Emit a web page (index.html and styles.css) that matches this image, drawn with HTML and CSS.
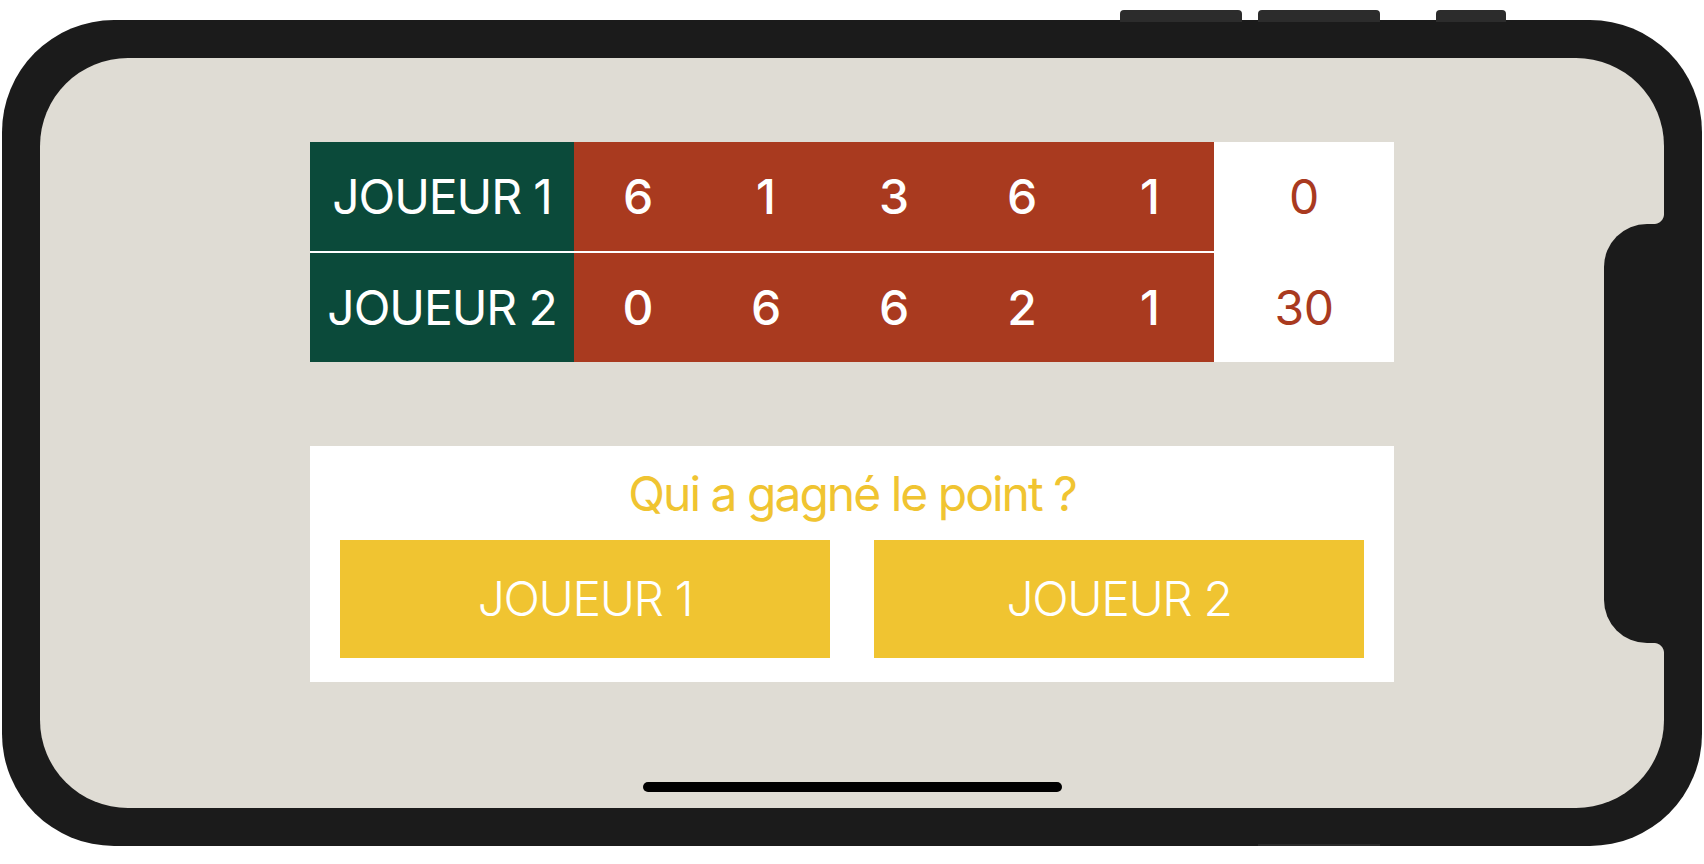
FILE: index.html
```html
<!DOCTYPE html>
<html lang="fr">
<head>
<meta charset="utf-8">
<title>Score</title>
<link rel="stylesheet" href="styles.css">
</head>
<body>
<div class="device">
  <span class="side-btn side-btn--a"></span>
  <span class="side-btn side-btn--b"></span>
  <span class="side-btn side-btn--c"></span>
  <span class="side-btn side-btn--d"></span>
  <div class="screen">
    <div class="notch"></div>
    <main class="app">
      <div class="scoreboard">
        <div class="row">
          <div class="name">JOUEUR 1</div>
          <div class="sets"><span>6</span><span>1</span><span>3</span><span>6</span><span>1</span></div>
          <div class="points">0</div>
        </div>
        <div class="row">
          <div class="name">JOUEUR 2</div>
          <div class="sets"><span>0</span><span>6</span><span>6</span><span>2</span><span>1</span></div>
          <div class="points">30</div>
        </div>
      </div>
      <section class="card">
        <h1 class="question">Qui a gagné le point ?</h1>
        <div class="choices">
          <button class="choice">JOUEUR 1</button>
          <button class="choice">JOUEUR 2</button>
        </div>
      </section>
    </main>
    <div class="home-indicator"></div>
  </div>
</div>
</body>
</html>
```
FILE: styles.css
```css
* { box-sizing: border-box; }

html, body {
  margin: 0;
  padding: 0;
  background: #ffffff;
}

body {
  font-family: "Inter", "Roboto", "Liberation Sans", sans-serif;
  padding: 20px 2px 0 2px;
}

.device {
  position: relative;
  width: 1700px;
  height: 826px;
  background: #1b1b1b;
  border-radius: 112px;
  padding: 38px;
}

.side-btn {
  position: absolute;
  background: #2c2c2c;
  height: 12px;
}
.side-btn--a { top: -10px; left: 1118px; width: 122px; border-radius: 4px 4px 0 0; }
.side-btn--b { top: -10px; left: 1256px; width: 122px; border-radius: 4px 4px 0 0; }
.side-btn--c { top: -10px; left: 1434px; width: 70px;  border-radius: 4px 4px 0 0; }
.side-btn--d { bottom: -10px; left: 1256px; width: 122px; border-radius: 0 0 4px 4px; }

.screen {
  position: relative;
  width: 100%;
  height: 100%;
  background: #dfdcd4;
  border-radius: 88px;
  display: flex;
  flex-direction: column;
  align-items: center;
}

.notch {
  position: absolute;
  right: 0;
  top: 166px;
  width: 60px;
  height: 419px;
  background: #1b1b1b;
  border-radius: 43px 0 0 43px;
}
.notch::before,
.notch::after {
  content: "";
  position: absolute;
  right: 0;
  width: 10px;
  height: 10px;
}
.notch::before {
  top: -10px;
  background: radial-gradient(circle at 0 0, transparent 9.5px, #1b1b1b 10.5px);
}
.notch::after {
  bottom: -10px;
  background: radial-gradient(circle at 0 100%, transparent 9.5px, #1b1b1b 10.5px);
}

.app {
  width: 1084px;
  padding-top: 84px;
  display: flex;
  flex-direction: column;
  gap: 84px;
}

.scoreboard {
  display: flex;
  flex-direction: column;
  gap: 2px;
  background: #ffffff;
}

.row {
  display: grid;
  grid-template-columns: 264px 640px 180px;
  height: 109px;
  line-height: 109px;
  font-size: 48px;
  text-align: center;
}

.name {
  background: #0b4a3a;
  color: #ffffff;
  font-weight: 400;
  letter-spacing: -1.1px;
}

.sets {
  background: #a93a1f;
  color: #ffffff;
  display: grid;
  grid-template-columns: repeat(5, 1fr);
  font-weight: 500;
}

.points {
  background: #ffffff;
  color: #a93a1f;
  font-weight: 400;
  letter-spacing: -0.5px;
}

.card {
  background: #ffffff;
  padding: 0 30px 24px;
}

.question {
  margin: 0;
  height: 94px;
  line-height: 96px;
  font-size: 48px;
  font-weight: 400;
  letter-spacing: -2px;
  color: #f0c431;
  text-align: center;
}

.choices {
  display: grid;
  grid-template-columns: 1fr 1fr;
  gap: 44px;
}

.choice {
  height: 118px;
  border: 0;
  margin: 0;
  padding: 0;
  background: #f0c431;
  color: #ffffff;
  font-family: inherit;
  font-size: 48px;
  font-weight: 300;
  letter-spacing: -1.4px;
  line-height: 118px;
  text-align: center;
}

.home-indicator {
  margin-top: auto;
  margin-bottom: 16px;
  width: 419px;
  height: 10px;
  border-radius: 5px;
  background: #000000;
}
```
